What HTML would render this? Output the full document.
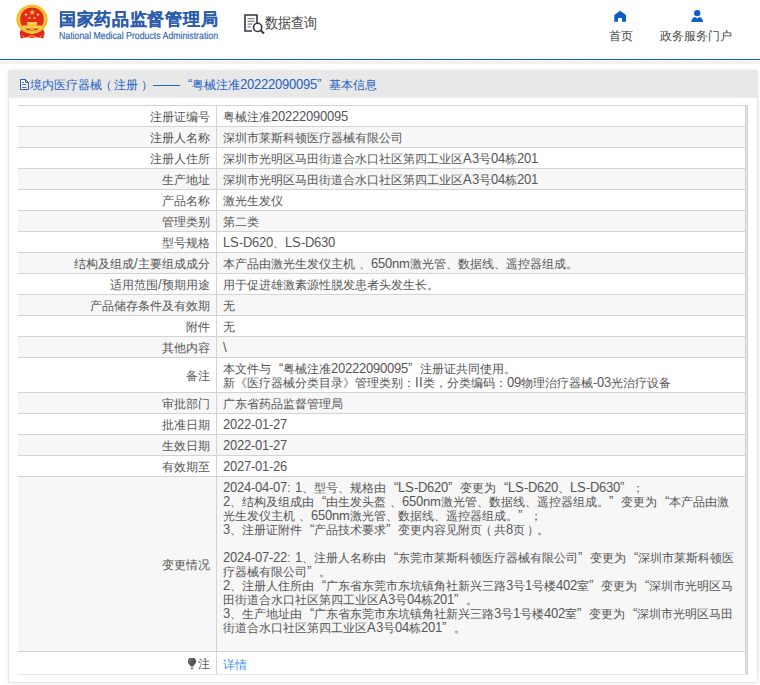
<!DOCTYPE html>
<html><head><meta charset="utf-8">
<style>
@font-face{font-family:"Liberation Sans";src:local("Liberation Sans");size-adjust:108%}
*{margin:0;padding:0;box-sizing:border-box}
html,body{width:760px;height:685px;overflow:hidden;background:#fff;font-family:"Liberation Sans",sans-serif;color:#555}
.abs{position:absolute}
i{font-style:normal}
.lq,.rq{display:inline-block;width:12px}
.lq{text-align:right}
.rq{text-align:left}
.lp{position:relative;left:-2px}
.rp{position:relative;left:2.5px}
.dash{display:inline-block;width:30px;height:14px;position:relative;vertical-align:top}
.dash:after{content:"";position:absolute;left:3px;right:0;top:8px;height:1.2px;background:#2462c4}
#emblem{left:15px;top:4px;width:35px;height:36px}
#t1{left:59px;top:6.5px;font-size:17px;letter-spacing:0.7px;font-weight:bold;color:#2b5cae;-webkit-text-stroke:0.15px #2b5cae;white-space:nowrap;line-height:24px}
#t2{left:59px;top:29px;font-size:9px;color:#2d63b5;white-space:nowrap;line-height:12px;letter-spacing:-0.1px;transform:scaleX(0.883);transform-origin:0 0}
#sq{left:244px;top:14px;width:21px;height:20px}
#sqt{left:265px;top:11px;font-size:13px;color:#444;line-height:20px;white-space:nowrap;transform:scaleY(1.15);transform-origin:0 0}
.nav{font-size:12px;color:#444;line-height:16px;white-space:nowrap}
#blue{left:0;top:59px;width:760px;height:1px;background:#1e62c0}
#hatch{left:0;top:61px;width:760px;height:3px;background:repeating-linear-gradient(135deg,#fff 0,#fff 2px,#ddd 2px,#ddd 3px)}
#panel{left:9px;top:71px;width:748px;height:611px;background:#fff;box-shadow:0 0 0 1px rgba(0,0,0,.05),0 0 6px rgba(0,0,0,.11)}
#ph{left:0;top:0;width:748px;height:27px;background:#e8e8e8;border-bottom:1px solid #e4ebf5}
#pht{left:21px;top:6px;font-size:12px;color:#2462c4;line-height:16px;white-space:nowrap}
#tbl{left:9px;top:34px;border-collapse:collapse;width:728px;font-size:12px;line-height:14px;color:#555}
#tbl td{border:1px solid #d3d3d3;padding:4px 0 2px 0;vertical-align:middle;white-space:nowrap}
#tbl td.l{width:198px;text-align:right;padding-right:6px;color:#555;border-left:none}
#tbl td.v{padding-left:6px;border-right:1px solid #cfcfd4}
#tbl tr:nth-child(even) td{background:#f7f7f7}
#tbl tr.last td{height:23px;border-bottom-color:#e6e9f0}
.bulb{width:9px;height:12px;vertical-align:-2px;margin-right:1px}
a{color:#3a8ef6;text-decoration:none;position:relative;top:1px}
</style></head><body>
<svg class="abs" style="left:12px;top:2px;width:40px;height:40px" viewBox="12 2 40 40">
  <path d="M21 29 L19.8 33 L20.8 38.4 L27 37.3 L32 38 L37 37.3 L43.2 38.4 L44.6 33 L43 29Z" fill="#e0261d"/>
  <path d="M22.5 35.5 L24.5 38 M41.5 35.5 L39.5 38 M28 37 Q32 35 36 37" fill="none" stroke="#f3c334" stroke-width="0.9"/>
  <ellipse cx="32" cy="19.3" rx="15.6" ry="14.6" fill="#f2b81c"/>
  <ellipse cx="32" cy="19.3" rx="14" ry="13" fill="#f6c93e"/>
  <circle cx="32" cy="19.2" r="11.8" fill="#e3281e"/>
  
  <rect x="22.8" y="25.4" width="18.4" height="3.2" fill="#f5cf45"/>
  <rect x="27.2" y="22.7" width="9.9" height="2.8" fill="#f5cf45"/>
  <path d="M26.6 22.9 H37.6 L36.6 22 H27.6Z" fill="#f5cf45"/>
  <path d="M23 30.3 Q32 34.5 41 30.3" fill="none" stroke="#f3c334" stroke-width="1.6"/>
  <circle cx="32" cy="31.5" r="2.2" fill="none" stroke="#f3c334" stroke-width="1.2"/>
  <polygon points="32.2,9.4 33,11.4 35.1,11.5 33.5,12.8 34,14.9 32.2,13.7 30.4,14.9 30.9,12.8 29.3,11.5 31.4,11.4" fill="#f7d847"/>
  <circle cx="26" cy="14.6" r="1.2" fill="#f7d847"/>
  <circle cx="38" cy="14.6" r="1.2" fill="#f7d847"/>
  <circle cx="29.5" cy="18" r="1.1" fill="#f7d847"/>
  <circle cx="34.5" cy="18" r="1.1" fill="#f7d847"/>
</svg>
<div id="t1" class="abs">国家药品监督管理局</div>
<svg class="abs" style="left:58px;top:28px;width:170px;height:14px" viewBox="0 0 170 14"><text x="1" y="10.6" font-family="Liberation Sans" font-size="9.4" fill="#2d63b5" textLength="159" lengthAdjust="spacingAndGlyphs" text-rendering="geometricPrecision" stroke="#2d63b5" stroke-width="0.15">National Medical Products Administration</text></svg>

<svg id="sq" class="abs" viewBox="0 0 21 20">
  <path d="M13 9.5 V1 H1 V17 H8" fill="none" stroke="#33334a" stroke-width="1.6"/>
  <rect x="3.5" y="4" width="7" height="1.3" fill="#888"/>
  <rect x="3.5" y="6.7" width="7" height="1.3" fill="#888"/>
  <rect x="3.5" y="9.4" width="5" height="1.3" fill="#888"/>
  <rect x="3.5" y="12.1" width="3" height="1.3" fill="#888"/>
  <circle cx="13.6" cy="13.4" r="4.1" fill="#fff" stroke="#33334a" stroke-width="1.6"/>
  <path d="M16.5 16.3 L20 19.6" stroke="#3a3a48" stroke-width="2"/>
</svg>
<div id="sqt" class="abs">数据查询</div>

<svg class="abs" style="left:610px;top:8px;width:20px;height:16px" viewBox="610 8 20 16">
  <path d="M614.3 15.1 L620.2 10.8 L626 15.1 V21.8 H622 V18 H618 V21.8 H614.3Z" fill="#0b5fc6"/>
</svg>
<div class="abs nav" style="left:609px;top:28px">首页</div>
<svg class="abs" style="left:688px;top:8px;width:20px;height:16px" viewBox="688 8 20 16">
  <circle cx="697.2" cy="13.1" r="3.2" fill="#0b5fc6"/>
  <path d="M691.2 22 Q691.6 17.6 695.2 16.9 L697.2 18.6 L699.2 16.9 Q702.8 17.6 703.1 22Z" fill="#0b5fc6"/>
</svg>
<div class="abs nav" style="left:660px;top:28px">政务服务门户</div>

<div id="blue" class="abs"></div>
<svg class="abs" style="left:0;top:59.5px;width:760px;height:4px"><defs><pattern id="hp" width="3" height="3" patternUnits="userSpaceOnUse" y="1"><path d="M-0.5 3.5 L3.5 -0.5" stroke="#d6d6d6" stroke-width="0.8"/></pattern></defs><rect x="0" y="1" width="760" height="3" fill="url(#hp)"/></svg>

<div id="panel" class="abs">
  <div id="ph" class="abs"></div>
  
  <div id="pht" class="abs">境内医疗器械<i class="lp">（</i>注册<i class="rp">）</i><i class="dash"></i><i class="lq">“</i>粤械注准20222090095<i class="rq">”</i>基本信息</div>
  <table id="tbl" class="abs">
<tr><td class="l">注册证编号</td><td class="v">粤械注准20222090095</td></tr>
<tr><td class="l">注册人名称</td><td class="v">深圳市莱斯科顿医疗器械有限公司</td></tr>
<tr><td class="l">注册人住所</td><td class="v">深圳市光明区马田街道合水口社区第四工业区A3号04栋201</td></tr>
<tr><td class="l">生产地址</td><td class="v">深圳市光明区马田街道合水口社区第四工业区A3号04栋201</td></tr>
<tr><td class="l">产品名称</td><td class="v">激光生发仪</td></tr>
<tr><td class="l">管理类别</td><td class="v">第二类</td></tr>
<tr><td class="l">型号规格</td><td class="v">LS-D620、LS-D630</td></tr>
<tr><td class="l">结构及组成/主要组成成分</td><td class="v">本产品由激光生发仪主机 、650nm激光管、数据线、遥控器组成。</td></tr>
<tr><td class="l">适用范围/预期用途</td><td class="v">用于促进雄激素源性脱发患者头发生长。</td></tr>
<tr><td class="l">产品储存条件及有效期</td><td class="v">无</td></tr>
<tr><td class="l">附件</td><td class="v">无</td></tr>
<tr><td class="l">其他内容</td><td class="v">\</td></tr>
<tr><td class="l">备注</td><td class="v">本文件与<i class="lq">“</i>粤械注准20222090095<i class="rq">”</i>注册证共同使用。<br>新《医疗器械分类目录》管理类别：II类，分类编码：09物理治疗器械-03光治疗设备</td></tr>
<tr><td class="l">审批部门</td><td class="v">广东省药品监督管理局</td></tr>
<tr><td class="l">批准日期</td><td class="v">2022-01-27</td></tr>
<tr><td class="l">生效日期</td><td class="v">2022-01-27</td></tr>
<tr><td class="l">有效期至</td><td class="v">2027-01-26</td></tr>
<tr><td class="l">变更情况</td><td class="v">2024-04-07: 1、型号、规格由<i class="lq">“</i>LS-D620<i class="rq">”</i>变更为<i class="lq">“</i>LS-D620、LS-D630<i class="rq">”</i>；<br>2、结构及组成由<i class="lq">“</i>由生发头盔 、650nm激光管、数据线、遥控器组成。<i class="rq">”</i>变更为<i class="lq">“</i>本产品由激<br>光生发仪主机 、650nm激光管、数据线、遥控器组成。<i class="rq">”</i>；<br>3、注册证附件<i class="lq">“</i>产品技术要求<i class="rq">”</i>变更内容见附页<i class="lp">（</i>共8页<i class="rp">）</i>。<br><br>2024-07-22: 1、注册人名称由<i class="lq">“</i>东莞市莱斯科顿医疗器械有限公司<i class="rq">”</i>变更为<i class="lq">“</i>深圳市莱斯科顿医<br>疗器械有限公司<i class="rq">”</i>。<br>2、注册人住所由<i class="lq">“</i>广东省东莞市东坑镇角社新兴三路3号1号楼402室<i class="rq">”</i>变更为<i class="lq">“</i>深圳市光明区马<br>田街道合水口社区第四工业区A3号04栋201<i class="rq">”</i>。<br>3、生产地址由<i class="lq">“</i>广东省东莞市东坑镇角社新兴三路3号1号楼402室<i class="rq">”</i>变更为<i class="lq">“</i>深圳市光明区马田<br>街道合水口社区第四工业区A3号04栋201<i class="rq">”</i>。<br>&nbsp;</td></tr>
<tr class="last"><td class="l"><svg class="bulb" viewBox="0 0 9 12"><path d="M1.2 6.3 A4 4 0 1 1 6.8 6.3 L5.3 8.6 H2.7Z" fill="#56565c"/><path d="M1.6 4.2 A2.6 2.6 0 0 1 3.6 1.3" fill="none" stroke="#9a9aa0" stroke-width="0.7"/><rect x="2.8" y="9.6" width="2.4" height="1.3" fill="#56565c"/></svg>注</td><td class="v"><a>详情</a></td></tr>
  </table>
  <div class="abs" style="left:737px;top:34px;width:1px;height:570px;background:#e4e7ef"></div>
  <div class="abs" style="left:738px;top:34px;width:1px;height:570px;background:#cfcfd4"></div>
</div>
<svg class="abs" style="left:16px;top:76px;width:18px;height:16px" viewBox="16 76 18 16">
  <path d="M20.5 79.5 H25.5 L28.5 82.5 V89.5 H20.5Z" fill="#fff" stroke="#1f5fcf" stroke-width="1"/>
  <path d="M25.5 79.5 V82.5 H28.5" fill="none" stroke="#1f5fcf" stroke-width="1"/>
  <path d="M22 82.5 H24 M22 84.5 H26.5 M22 87.5 H26.5" stroke="#4a6cc8" stroke-width="1"/>
</svg>
</body></html>
